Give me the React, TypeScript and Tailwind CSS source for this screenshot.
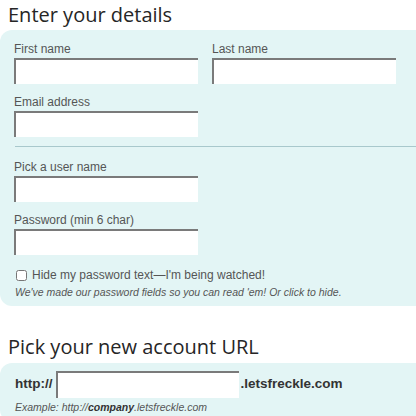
import { useState } from 'react'

const field = 'block h-[26px] w-[184px] bg-white border-t-2 border-l-2 border-[#7a7a7a] outline-none px-1 text-[13px]'
const label = 'block text-[12px] leading-[16px] text-[#555]'

function Field({ name, type = 'text' }: { name: string; type?: string }) {
  return (
    <div>
      <label className={label}>{name}</label>
      <input type={type} className={`${field} mt-px`} />
    </div>
  )
}

export default function App() {
  const [hide, setHide] = useState(false)

  return (
    <div style={{ fontFamily: "'Liberation Sans', Arial, sans-serif" }} className="w-[416px] h-[416px] overflow-hidden bg-white">
      <h1 style={{ fontFamily: "'Open Sans', sans-serif" }} className="pl-2 pt-[2px] h-[30px] text-[20px] font-medium leading-[26px] text-[#262626]">
        Enter your details
      </h1>

      <div className="w-[440px] rounded-l-xl bg-[#e3f5f5] pt-[11px] pb-[7px]">
        <div className="pl-[14px] flex gap-[14px]">
          <Field name="First name" />
          <Field name="Last name" />
        </div>
        <div className="pl-[14px] mt-[10px]">
          <Field name="Email address" />
        </div>

        <div className="ml-[15px] mt-[9px] border-t border-[#a8c8cc]" />

        <div className="pl-[14px] mt-[12px]">
          <Field name="Pick a user name" />
        </div>
        <div className="pl-[14px] mt-[10px]">
          <Field name="Password (min 6 char)" type={hide ? 'password' : 'text'} />
        </div>

        <label className="mt-[12px] pl-[16px] flex items-center gap-[5px] text-[12px] leading-[16px] text-[#555]">
          <input type="checkbox" checked={hide} onChange={e => setHide(e.target.checked)} className="w-[11px] h-[11px] m-0 accent-gray-400" />
          Hide my password text—I'm being watched!
        </label>
        <p className="pl-[15px] mt-[2px] text-[10.5px] leading-[14px] italic text-[#555]">
          We've made our password fields so you can read 'em! Or click to hide.
        </p>
      </div>

      <h2 style={{ fontFamily: "'Open Sans', sans-serif" }} className="pl-2 mt-[28px] h-[29px] text-[20px] font-medium leading-[26px] text-[#262626]">
        Pick your new account URL
      </h2>

      <div className="w-[440px] rounded-l-xl bg-[#e3f5f5] pt-[8px] pb-2">
        <div className="pl-[15px] flex items-center gap-[4px] text-[13.5px] font-bold text-[#333]">
          <span>http://</span>
          <input type="text" className="block h-[27px] w-[183px] bg-white border-t-2 border-l-2 border-[#7a7a7a] outline-none px-1 text-[13px] font-normal" />
          <span className="-ml-[3px]">.letsfreckle.com</span>
        </div>
        <p className="pl-[15px] mt-[2px] text-[10.5px] leading-[14px] italic text-[#555]">
          Example: http://<b className="text-[#333]">company</b>.letsfreckle.com
        </p>
      </div>
    </div>
  )
}
